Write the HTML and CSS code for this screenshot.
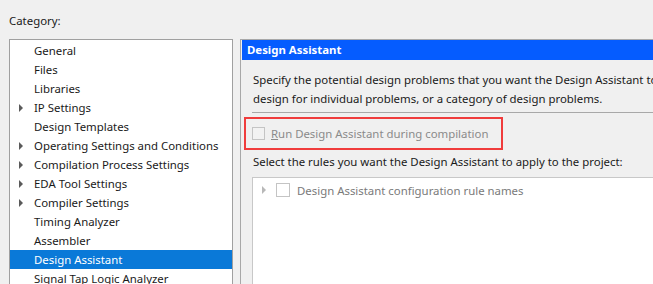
FILE: index.html
```html
<!DOCTYPE html>
<html>
<head>
<meta charset="utf-8">
<link rel="stylesheet" href="styles.css">
</head>
<body>
<div class="page">
  <div class="cat-label">Category:</div>
  <div class="main">
    <div class="tree">
      <div class="row">General</div>
      <div class="row">Files</div>
      <div class="row">Libraries</div>
      <div class="row has-kids"><span class="arrow"></span>IP Settings</div>
      <div class="row">Design Templates</div>
      <div class="row has-kids"><span class="arrow"></span>Operating Settings and Conditions</div>
      <div class="row has-kids"><span class="arrow"></span>Compilation Process Settings</div>
      <div class="row has-kids"><span class="arrow"></span>EDA Tool Settings</div>
      <div class="row has-kids"><span class="arrow"></span>Compiler Settings</div>
      <div class="row">Timing Analyzer</div>
      <div class="row">Assembler</div>
      <div class="row selected">Design Assistant</div>
      <div class="row">Signal Tap Logic Analyzer</div>
    </div>
    <div class="panel">
      <div class="panel-head">Design Assistant</div>
      <div class="panel-body">
        <p class="desc">Specify the potential design problems that you want the Design Assistant to<br>design for individual problems, or a category of design problems.</p>
        <div class="sep"></div>
        <div class="run-row">
          <span class="cb"></span>
          <span class="run-label"><span class="ul">R</span>un Design Assistant during compilation</span>
        </div>
        <div class="select-label">Select the rules you want the Design Assistant to apply to the project:</div>
        <div class="rules">
          <div class="rule-row">
            <span class="arrow light"></span>
            <span class="cb"></span>
            <span class="rule-text">Design Assistant configuration rule names</span>
          </div>
        </div>
      </div>
    </div>
  </div>
</div>
</body>
</html>
```
FILE: styles.css
```css
html, body {
  margin: 0;
  padding: 0;
  background: #f0f0f0;
  overflow: hidden;
  width: 653px;
  height: 284px;
}
.page {
  font-family: "Noto Sans", "Open Sans", sans-serif;
  font-size: 11.4px;
  color: #1a1a1a;
  width: 653px;
  height: 284px;
  overflow: hidden;
}
.cat-label {
  padding: 11px 0 0 9px;
  height: 19px;
  line-height: 19px;
}
.main {
  display: flex;
  align-items: flex-start;
  gap: 7px;
  margin-top: 9px;
  padding-left: 9px;
}
.tree {
  flex: none;
  width: 224px;
  height: 300px;
  box-sizing: border-box;
  border: 1px solid #a0a0a0;
  background: #fff;
  padding-top: 1px;
}
.row {
  height: 19px;
  line-height: 19px;
  padding-left: 24px;
  position: relative;
  white-space: nowrap;
}
.row.selected {
  background: #0a79d8;
  color: #fff;
}
.arrow {
  position: absolute;
  left: 9px;
  top: 6px;
  width: 0;
  height: 0;
  border-top: 4px solid transparent;
  border-bottom: 4px solid transparent;
  border-left: 4px solid #5a5a5a;
}
.arrow.light {
  position: static;
  display: inline-block;
  border-left-color: #b8b8b8;
}
.panel {
  flex: none;
  width: 500px;
  height: 300px;
  box-sizing: border-box;
  border: 1px solid #a8a8a8;
  padding: 0 0 0 1px;
}
.panel-head {
  height: 20px;
  line-height: 20px;
  background: #055cff;
  color: #fff;
  font-weight: bold;
  padding-left: 5px;
  white-space: nowrap;
}
.panel-body {
  padding-left: 10px;
}
.desc {
  margin: 10px 0 0 0;
  line-height: 19px;
  white-space: nowrap;
  padding-left: 1px;
}
.sep {
  margin-top: 4px;
  height: 1px;
  background: #a8a8a8;
}
.run-row {
  margin-top: 4px;
  margin-left: -8px;
  width: 259px;
  height: 33px;
  box-sizing: border-box;
  border: 2px solid #f03c3c;
  display: flex;
  align-items: center;
  padding-left: 6px;
  gap: 6px;
  color: #8a8a8a;
  white-space: nowrap;
}
.ul { text-decoration: underline; }
.cb {
  flex: none;
  display: inline-block;
  width: 13px;
  height: 13px;
  box-sizing: border-box;
  border: 1px solid #c4c4c4;
  background: #f2f2f2;
}
.select-label {
  margin-top: 2px;
  line-height: 19px;
  padding-left: 1px;
  white-space: nowrap;
}
.rules {
  margin-top: 6px;
  height: 200px;
  border: 1px solid #c8c8c8;
  border-right: none;
  background: #fff;
}
.rule-row {
  display: flex;
  align-items: center;
  height: 22px;
  margin-top: 1px;
  padding-left: 9px;
  white-space: nowrap;
}
.rule-row .cb {
  width: 14px;
  height: 14px;
  margin-left: 10px;
  background: #fff;
}
.rule-text {
  margin-left: 7px;
  color: #7a7a7a;
}
```
